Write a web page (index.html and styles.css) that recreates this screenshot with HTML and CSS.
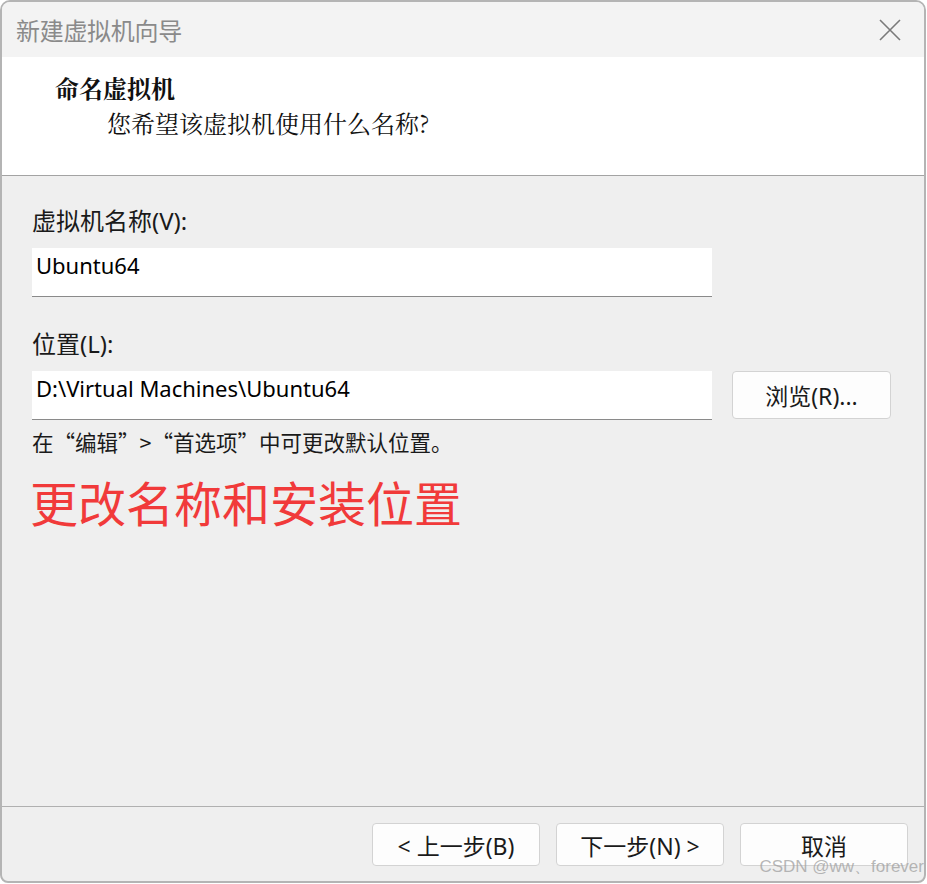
FILE: index.html
```html
<!DOCTYPE html>
<html lang="zh">
<head>
<meta charset="utf-8">
<link rel="stylesheet" href="styles.css">
</head>
<body>
<div class="window">
  <div class="titlebar">
    <span class="title">新建虚拟机向导</span>
    <svg class="close" width="24" height="24" viewBox="0 0 24 24"><path d="M2 2 L22 22 M22 2 L2 22" stroke="#7a7a7a" stroke-width="1.6" fill="none"/></svg>
  </div>
  <div class="header">
    <div class="h-title">命名虚拟机</div>
    <div class="h-sub">您希望该虚拟机使用什么名称?</div>
  </div>
  <div class="body">
    <div class="label first">虚拟机名称(V):</div>
    <div class="row first">
      <div class="input">Ubuntu64</div>
    </div>
    <div class="label second">位置(L):</div>
    <div class="row">
      <div class="input">D:\Virtual Machines\Ubuntu64</div>
      <div class="btn browse">浏览(R)...</div>
    </div>
    <div class="note">在“编辑”&gt;“首选项”中可更改默认位置。</div>
    <div class="red">更改名称和安装位置</div>
  </div>
  <div class="footer">
    <div class="btn nav">&lt; 上一步(B)</div>
    <div class="btn nav">下一步(N) &gt;</div>
    <div class="btn nav">取消</div>
    <div class="watermark">CSDN @ww、forever</div>
  </div>
</div>
</body>
</html>
```
FILE: styles.css
```css
html, body {
  margin: 0;
  padding: 0;
  background: #ffffff;
}
body {
  width: 927px;
  height: 884px;
  overflow: hidden;
  font-family: "Noto Sans", "Noto Sans CJK SC", sans-serif;
}
.window {
  box-sizing: border-box;
  width: 926px;
  height: 883px;
  border: 2px solid #b4b4b4;
  border-radius: 10px 10px 8px 8px;
  background: #efefef;
  display: flex;
  flex-direction: column;
  overflow: hidden;
  position: relative;
}
.titlebar {
  height: 55px;
  background: #f3f3f3;
  display: flex;
  align-items: center;
  justify-content: space-between;
  padding: 0 22px 0 14px;
  flex-shrink: 0;
}
.title {
  font-family: "Noto Sans CJK SC", sans-serif;
  font-size: 24px;
  color: #8a8a8a;
  letter-spacing: -0.3px;
}
.close {
  display: block;
}
.header {
  height: 119px;
  background: #ffffff;
  border-bottom: 1px solid #a3a3a3;
  flex-shrink: 0;
  box-sizing: border-box;
  padding-top: 16px;
}
.h-title {
  margin-left: 53px;
  font-family: "Noto Serif CJK SC", "Noto Sans CJK SC", serif;
  font-weight: bold;
  font-size: 24px;
  line-height: 30px;
  color: #111;
}
.h-sub {
  margin-left: 105px;
  margin-top: 5px;
  font-family: "Noto Serif CJK SC", "Noto Sans CJK SC", serif;
  font-size: 24px;
  line-height: 30px;
  color: #111;
}
.body {
  flex: 1;
  padding: 0 0 0 30px;
  color: #1a1a1a;
}
.label {
  font-size: 24px;
  line-height: 30px;
  font-family: "Noto Sans", "Noto Sans CJK SC", sans-serif;
}
.label.first {
  margin-top: 30px;
}
.label.second {
  margin-top: 32px;
}
.row {
  display: flex;
  gap: 20px;
  margin-top: 12px;
  align-items: flex-start;
}
.input {
  box-sizing: border-box;
  width: 680px;
  height: 49px;
  background: #ffffff;
  border-bottom: 1px solid #8a8a8a;
  padding: 2px 0 0 4px;
  font-size: 22px;
  line-height: 30px;
  color: #000;
  font-family: "Noto Sans", sans-serif;
}
.btn {
  box-sizing: border-box;
  background: #fdfdfd;
  border: 1px solid #d3d3d3;
  border-radius: 4px;
  display: flex;
  align-items: center;
  justify-content: center;
  font-size: 23px;
  color: #1a1a1a;
  font-family: "Noto Sans", "Noto Sans CJK SC", sans-serif;
}
.browse {
  width: 159px;
  height: 48px;
}
.note {
  margin-top: 7px;
  font-size: 21.5px;
  line-height: 30px;
  font-family: "Noto Sans CJK SC", sans-serif;
}
.red {
  margin-top: 14px;
  margin-left: -2px;
  font-size: 48px;
  line-height: 60px;
  color: #f13a3a;
  font-family: "Noto Sans CJK SC", sans-serif;
}
.footer {
  box-sizing: border-box;
  height: 75px;
  border-top: 1px solid #b0b0b0;
  flex-shrink: 0;
  display: flex;
  justify-content: flex-end;
  align-items: flex-start;
  gap: 16px;
  padding: 16px 16px 0 0;
  position: relative;
}
.nav {
  width: 168px;
  height: 43px;
}
.watermark {
  position: absolute;
  right: 0;
  bottom: 3px;
  font-size: 17px;
  color: rgba(160,160,160,0.75);
  font-family: "Liberation Sans", sans-serif;
}
```
